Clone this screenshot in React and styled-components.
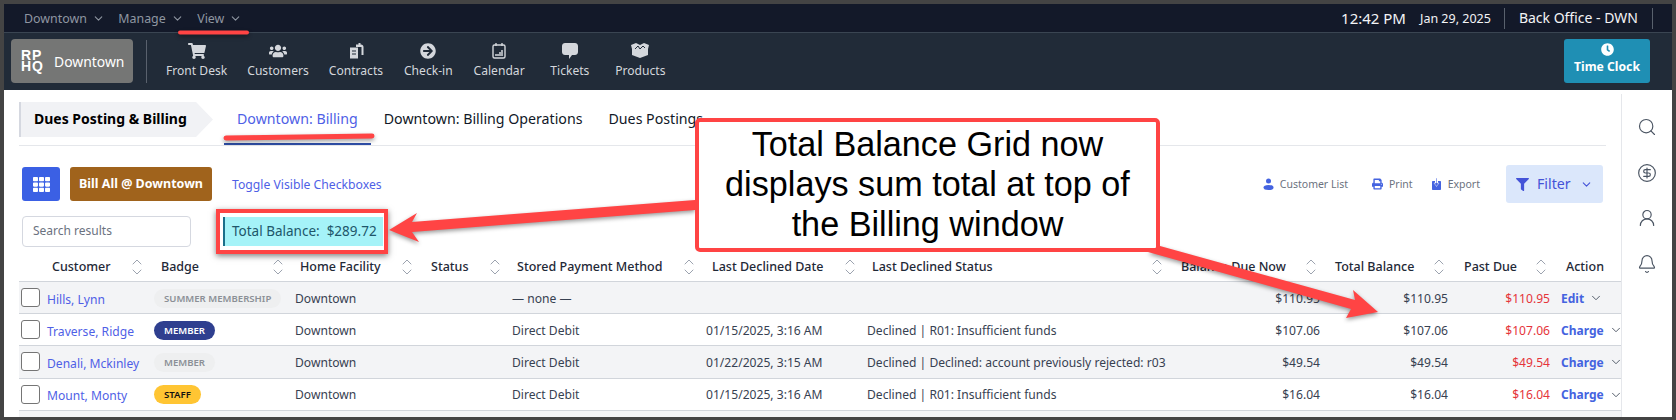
import React from 'react';
import styled, { createGlobalStyle } from 'styled-components';
import { ChevronDown, ChevronUp, Search, CircleDollarSign, UserRound, Bell } from 'lucide-react';
import {
    FaShoppingCart, FaUsers, FaArrowCircleRight, FaClock, FaFilter, FaPrint, FaTh,
} from 'react-icons/fa';

const Global = createGlobalStyle`
    html, body { margin: 0; padding: 0; background: #444; }
    body { font-family: "Noto Sans", "Open Sans", Arial, sans-serif; }
`;

const COLS = '135px 141px 129px 88px 194px 161px 307px 154px 128px 102px 63px';

const Frame = styled.div`
    position: relative;
    width: 1676px;
    height: 420px;
    box-sizing: border-box;
    padding: 4px 4px 3px;
    background: #444;
    display: flex;
    flex-direction: column;
    overflow: hidden;
`;

const TopBar = styled.div`
    height: 29px;
    box-sizing: border-box;
    flex: none;
    background: #131929;
    border-bottom: 1px solid #3a4552;
    display: flex;
    align-items: center;
    justify-content: space-between;
    padding: 0 19px 0 20px;
`;

const MenuGroup = styled.div`
    display: flex;
    align-items: center;
    gap: 13.5px;
`;

const Menu = styled.span`
    display: flex;
    align-items: center;
    gap: 5px;
    color: #8f96a1;
    font-size: 12.4px;
    svg { width: 13px; height: 13px; }
`;

const Status = styled.div`
    display: flex;
    align-items: center;
    color: #f3f4f6;
    height: 21px;
`;

const Time = styled.span`
    font-size: 15px;
    margin-right: 14px;
`;

const DateText = styled.span`
    font-size: 12.5px;
    margin-right: 13px;
`;

const Office = styled.span`
    font-size: 14px;
    height: 21px;
    line-height: 20px;
    padding: 0 14px;
    border-left: 1px solid #59616d;
    border-right: 1px solid #59616d;
`;

const NavBar = styled.div`
    height: 57px;
    box-sizing: border-box;
    flex: none;
    background: #212b38;
    display: flex;
    align-items: flex-start;
    padding: 6px 22px 0 7px;
`;

const Logo = styled.div`
    width: 122px;
    height: 44px;
    box-sizing: border-box;
    background: #757675;
    border-radius: 4px;
    display: flex;
    align-items: center;
    gap: 10px;
    padding-left: 10px;
    color: #fff;
    font-size: 13.9px;
`;

const LogoMark = styled.span`
    font-family: "Liberation Sans", Arial, sans-serif;
    font-weight: 700;
    font-size: 14px;
    line-height: 11.5px;
    letter-spacing: 1px;
`;

const NavDivider = styled.div`
    width: 1px;
    height: 43px;
    margin: 1px 9px 0 13px;
    background: #59616d;
`;

const NavItem = styled.div`
    min-width: 70.5px;
    padding: 0 10px;
    box-sizing: border-box;
    display: flex;
    flex-direction: column;
    align-items: center;
    color: #d4d7dc;
    font-size: 12.1px;
    line-height: 18px;
    svg { height: 16px; width: 18px; margin: 4px 0 3px; color: #d4d7dc; }
`;

const ClockButton = styled.div`
    margin-left: auto;
    width: 86px;
    height: 44px;
    background: #1f8fb4;
    border-radius: 3px;
    color: #fff;
    font-size: 12.2px;
    font-weight: 700;
    display: flex;
    flex-direction: column;
    align-items: center;
    line-height: 18px;
    svg { width: 13px; height: 13px; margin: 4px 0 2px; }
`;

const Body = styled.div`
    flex: 1;
    min-height: 0;
    background: #fff;
    display: flex;
    overflow: hidden;
`;

const Main = styled.div`
    width: 1617px;
    box-sizing: border-box;
    padding: 12px 15px 0;
`;

const TabRow = styled.div`
    height: 43px;
    display: flex;
    border-bottom: 1px solid #e5e7eb;
`;

const Crumb = styled.div`
    width: 194px;
    height: 35px;
    box-sizing: border-box;
    background: #f1f2f5;
    border-left: 2px solid #d5d8e0;
    padding-left: 13px;
    margin-right: 11px;
    line-height: 34px;
    font-size: 14px;
    font-weight: 700;
    color: #000;
    white-space: nowrap;
    clip-path: polygon(0 0, 177px 0, 100% 50%, 177px 100%, 0 100%);
`;

const Tab = styled.div`
    height: 43px;
    box-sizing: border-box;
    padding: 0 13px;
    line-height: 34px;
    font-size: 14.2px;
    color: ${p => (p.$active ? '#4f5fe6' : '#111827')};
    border-bottom: 2px solid ${p => (p.$active ? '#2f4fa8' : 'transparent')};
`;

const Toolbar = styled.div`
    display: flex;
    align-items: center;
    height: 38px;
    margin-top: 19px;
    padding: 0 3px;
`;

const GridButton = styled.div`
    width: 38px;
    height: 34px;
    background: #3b60e4;
    border-radius: 3px;
    color: #fff;
    display: flex;
    align-items: center;
    justify-content: center;
    svg { width: 17px; height: 17px; }
`;

const BillButton = styled.div`
    margin-left: 10px;
    width: 142px;
    height: 34px;
    background: #a0631c;
    border-radius: 3px;
    color: #fff;
    font-size: 12.5px;
    font-weight: 700;
    line-height: 34px;
    text-align: center;
`;

const TextLink = styled.span`
    margin-left: 20px;
    font-size: 12.2px;
    color: #4f5fe6;
`;

const ToolLink = styled.span`
    display: flex;
    align-items: center;
    gap: 6px;
    margin-left: ${p => p.$gap || '24px'};
    font-size: 10.5px;
    color: #6b7280;
    svg { width: 11px; height: 12px; color: #4463e0; }
`;

const FilterButton = styled.div`
    margin-left: 26px;
    width: 97px;
    height: 38px;
    box-sizing: border-box;
    background: #dbe7fb;
    border-radius: 3px;
    color: #4453d8;
    font-size: 14.2px;
    line-height: 36px;
    display: flex;
    align-items: center;
    padding-left: 10px;
    svg:first-child { width: 13px; height: 13px; margin-right: 8px; }
    svg:last-child { width: 13px; height: 13px; margin-left: 9px; }
`;

const SearchRow = styled.div`
    display: flex;
    align-items: center;
    height: 31px;
    margin-top: 13px;
    padding-left: 3px;
`;

const SearchBox = styled.div`
    width: 169px;
    height: 31px;
    box-sizing: border-box;
    border: 1px solid #d5d8e0;
    border-radius: 4px;
    padding-left: 10px;
    line-height: 28px;
    font-size: 12px;
    color: #6b7280;
`;

const Highlight = styled.div`
    margin-left: 25px;
    width: 172px;
    height: 45px;
    flex: none;
    box-sizing: border-box;
    border: 4px solid #ff4444;
    box-shadow: 0 2px 6px rgba(0, 0, 0, 0.5);
    padding: 4px 1px 4px 3px;
    background: #fff;
`;

const TotalBalance = styled.div`
    height: 29px;
    box-sizing: border-box;
    background: #a5f3f8;
    border-left: 2px solid #1a6f8a;
    padding-left: 7px;
    line-height: 28px;
    font-size: 13.5px;
    color: #20566a;
    white-space: pre;
`;

const HeadRow = styled.div`
    display: grid;
    grid-template-columns: ${COLS};
    height: 28px;
    margin: 7px -15px 0 0;
    box-sizing: border-box;
    border-bottom: 1px solid #d1d5db;
`;

const HeadCell = styled.div`
    display: flex;
    align-items: center;
    justify-content: space-between;
    padding: 0 9px 2px ${p => p.$left || '6px'};
    font-size: 12.5px;
    font-weight: 500;
    color: #1f2937;
    white-space: nowrap;
`;

const SortWrap = styled.span`
    display: flex;
    flex-direction: column;
    color: #9ca3af;
    svg { width: 16px; height: 16px; margin: -3px 0; stroke-width: 1.5; }
`;

const Row = styled.div`
    display: grid;
    grid-template-columns: ${COLS};
    height: 32.2px;
    box-sizing: border-box;
    padding-top: 1px;
    margin-right: -15px;
    align-items: center;
    background: ${p => (p.$shade ? '#f3f4f6' : '#fff')};
    border-bottom: 1px solid #d1d5db;
    font-size: 12.1px;
    color: #374151;
`;

const CustomerCell = styled.div`
    display: flex;
    align-items: center;
    gap: 7px;
    padding-left: 2px;
`;

const Check = styled.span`
    width: 19px;
    height: 19px;
    margin-top: -1px;
    flex: none;
    box-sizing: border-box;
    border: 1px solid #757575;
    border-radius: 3px;
    background: #fff;
`;

const Name = styled.span`
    color: #4f5fe6;
    white-space: nowrap;
    padding-top: 2px;
`;

const Badge = styled.span`
    display: inline-block;
    height: 19px;
    line-height: 19px;
    padding: 0 10px;
    border-radius: 10px;
    font-size: 9.6px;
    font-weight: 600;
    white-space: nowrap;
    color: ${p => p.$fg};
    background: ${p => p.$bg};
`;

const Cell = styled.div`
    white-space: nowrap;
`;

const Money = styled.div`
    text-align: right;
    padding-right: 8px;
    color: ${p => (p.$due ? '#e5343a' : '#374151')};
`;

const ActionCell = styled.div`
    display: flex;
    align-items: center;
    gap: 5px;
    padding-left: 3px;
    color: #4463e0;
    font-weight: 700;
    font-size: 12px;
    svg { width: 14px; height: 14px; flex: none; color: #4b5563; stroke-width: 1.6; }
`;

const Rail = styled.div`
    flex: 1;
    margin-top: 4px;
    padding-top: 23px;
    border-left: 1px solid #e5e7eb;
    display: flex;
    flex-direction: column;
    align-items: center;
    gap: 25.5px;
    color: #4b5563;
    svg { width: 20px; height: 20px; stroke-width: 1.4; }
`;

const Marks = styled.svg`
    position: absolute;
    left: 0;
    top: 0;
    pointer-events: none;
`;

const Callout = styled.div`
    position: absolute;
    left: 695px;
    top: 118px;
    width: 465px;
    height: 134px;
    box-sizing: border-box;
    border: 4px solid #ff4444;
    border-radius: 5px;
    background: #fff;
    padding-top: 2px;
    color: #000;
    font-family: "Liberation Sans", Arial, sans-serif;
    font-size: 34.2px;
    line-height: 40px;
    text-align: center;
`;

function Sort() {
    return (
        <SortWrap>
            <ChevronUp />
            <ChevronDown />
        </SortWrap>
    );
}

const ContractIcon = () => (
    <svg viewBox="0 0 18 16" fill="currentColor">
        <path d="M9 1.5h2.5V0h2v1.5H14c1.5 0 2.5 1 2.5 2.5v8h-2V4H9z" />
        <path fillRule="evenodd" d="M3 4.500h8v11H3zM5 7.500v1h4v-1zM5 10.500v1h4v-1z" />
    </svg>
);

const CalendarIcon = () => (
    <svg viewBox="0 0 18 16" fill="none" stroke="currentColor">
        <rect x="3" y="2" width="12" height="13" rx="1.5" strokeWidth="1.4" />
        <path d="M6 0v3M12 0v3" strokeWidth="1.4" />
        <path d="M5 12h8M9 10h4M11 8h2" strokeWidth="1.5" />
    </svg>
);

const BubbleIcon = () => (
    <svg viewBox="0 0 18 16" fill="currentColor">
        <path d="M3 0h10c1.500 0 3 1 3 3v6c0 2-1.500 3-3 3h-3l-3 4v-4H3c-1.500 0-3-1-3-3V3c0-2 1.500-3 3-3z" transform="translate(1 0)" />
    </svg>
);

const BoxIcon = () => (
    <svg viewBox="0 0 18 16" fill="currentColor">
        <path d="M0 2l5-2 4 2 4-2 5 2-1 4v6l-8 3-8-3V6z" />
        <path d="M4 6l3-3 2 3 3-3 2 2" fill="none" stroke="#212b38" strokeWidth="1" />
    </svg>
);

const PersonIcon = () => (
    <svg viewBox="0 0 11 12" fill="currentColor">
        <circle cx="5.500" cy="3" r="2.500" />
        <ellipse cx="5.500" cy="9.500" rx="5" ry="2.500" />
    </svg>
);

const ExportIcon = () => (
    <svg viewBox="0 0 11 12" fill="currentColor">
        <path d="M2 3h2v2h3V3h2c.6 0 1 .4 1 1v7c0 .6-.4 1-1 1H2c-.6 0-1-.4-1-1V4c0-.6.4-1 1-1z" />
        <path d="M5 0h1v5h2L5.500 8.500 3 5h2z" stroke="#fff" strokeWidth="0.5" />
    </svg>
);

const heads = [
    ['Customer', '33px'], ['Badge', '7px'], ['Home Facility', '5px'], ['Status', '7px'],
    ['Stored Payment Method', '5px'], ['Last Declined Date', '6px'], ['Last Declined Status', '5px'],
    ['Balance Due Now', '7px'], ['Total Balance', '7px'], ['Past Due', '8px'],
];

const badges = {
    summer: { fg: '#8b8f96', bg: '#eeeff0', text: 'SUMMER MEMBERSHIP' },
    grey: { fg: '#8b8f96', bg: '#eeeff0', text: 'MEMBER' },
    member: { fg: '#fff', bg: '#2f3f8f', text: 'MEMBER' },
    staff: { fg: '#111', bg: '#ffc533', text: 'STAFF' },
};

const rows = [
    { name: 'Hills, Lynn', badge: 'summer', pay: '— none —', date: '', status: '', amount: '$110.95', action: 'Edit' },
    { name: 'Traverse, Ridge', badge: 'member', pay: 'Direct Debit', date: '01/15/2025, 3:16 AM', status: 'Declined | R01: Insufficient funds', amount: '$107.06', action: 'Charge' },
    { name: 'Denali, Mckinley', badge: 'grey', pay: 'Direct Debit', date: '01/22/2025, 3:15 AM', status: 'Declined | Declined: account previously rejected: r03', amount: '$49.54', action: 'Charge' },
    { name: 'Mount, Monty', badge: 'staff', pay: 'Direct Debit', date: '01/15/2025, 3:16 AM', status: 'Declined | R01: Insufficient funds', amount: '$16.04', action: 'Charge' },
];

export default function App() {
    return (
        <Frame>
            <Global />
            <TopBar>
                <MenuGroup>
                    <Menu>Downtown <ChevronDown /></Menu>
                    <Menu>Manage <ChevronDown /></Menu>
                    <Menu>View <ChevronDown /></Menu>
                </MenuGroup>
                <Status>
                    <Time>12:42 PM</Time>
                    <DateText>Jan 29, 2025</DateText>
                    <Office>Back Office - DWN</Office>
                </Status>
            </TopBar>
            <NavBar>
                <Logo>
                    <LogoMark>RP<br />HQ</LogoMark>
                    Downtown
                </Logo>
                <NavDivider />
                <NavItem><FaShoppingCart />Front Desk</NavItem>
                <NavItem><FaUsers />Customers</NavItem>
                <NavItem><ContractIcon />Contracts</NavItem>
                <NavItem><FaArrowCircleRight />Check-in</NavItem>
                <NavItem><CalendarIcon />Calendar</NavItem>
                <NavItem><BubbleIcon />Tickets</NavItem>
                <NavItem><BoxIcon />Products</NavItem>
                <ClockButton><FaClock />Time Clock</ClockButton>
            </NavBar>
            <Body>
                <Main>
                    <TabRow>
                        <Crumb>Dues Posting &amp; Billing</Crumb>
                        <Tab $active>Downtown: Billing</Tab>
                        <Tab>Downtown: Billing Operations</Tab>
                        <Tab>Dues Postings</Tab>
                    </TabRow>
                    <Toolbar>
                        <GridButton><FaTh /></GridButton>
                        <BillButton>Bill All @ Downtown</BillButton>
                        <TextLink>Toggle Visible Checkboxes</TextLink>
                        <ToolLink $gap="auto"><PersonIcon />Customer List</ToolLink>
                        <ToolLink><FaPrint />Print</ToolLink>
                        <ToolLink $gap="18px"><ExportIcon />Export</ToolLink>
                        <FilterButton><FaFilter />Filter<ChevronDown /></FilterButton>
                    </Toolbar>
                    <SearchRow>
                        <SearchBox>Search results</SearchBox>
                        <Highlight>
                            <TotalBalance>{'Total Balance:  $289.72'}</TotalBalance>
                        </Highlight>
                    </SearchRow>
                    <HeadRow>
                        {heads.map(([label, left]) => (
                            <HeadCell key={label} $left={left}>{label}<Sort /></HeadCell>
                        ))}
                        <HeadCell $left="8px">Action</HeadCell>
                    </HeadRow>
                    {rows.map((r, i) => (
                        <Row key={r.name} $shade={i % 2 === 0}>
                            <CustomerCell><Check /><Name>{r.name}</Name></CustomerCell>
                            <Cell>
                                <Badge $fg={badges[r.badge].fg} $bg={badges[r.badge].bg}>{badges[r.badge].text}</Badge>
                            </Cell>
                            <Cell>Downtown</Cell>
                            <Cell />
                            <Cell>{r.pay}</Cell>
                            <Cell>{r.date}</Cell>
                            <Cell>{r.status}</Cell>
                            <Money>{r.amount}</Money>
                            <Money>{r.amount}</Money>
                            <Money $due>{r.amount}</Money>
                            <ActionCell>{r.action}<ChevronDown /></ActionCell>
                        </Row>
                    ))}
                    <Row $shade />
                </Main>
                <Rail>
                    <Search />
                    <CircleDollarSign />
                    <UserRound />
                    <Bell />
                </Rail>
            </Body>
            <Marks width="1676" height="420" viewBox="0 0 1676 420">
                <g fill="#ff4444" stroke="#ff4444" style={{ filter: 'drop-shadow(0 2px 2px rgba(0,0,0,0.4))' }}>
                    <line x1="180" y1="32.500" x2="247" y2="32.500" strokeWidth="4" strokeLinecap="round" />
                    <line x1="226" y1="138" x2="372" y2="136" strokeWidth="5" strokeLinecap="round" />
                    <path stroke="none" d="M695 200 L412 222 L417 213 L389 230 L419 242 L412 232 L695 210 Z" />
                    <path stroke="none" d="M1160 246 L1355 300 L1353 290 L1378 312 L1346 318 L1351 309 L1148 252 Z" />
                </g>
            </Marks>
            <Callout>
                Total Balance Grid now<br />
                displays sum total at top of<br />
                the Billing window
            </Callout>
        </Frame>
    );
}
